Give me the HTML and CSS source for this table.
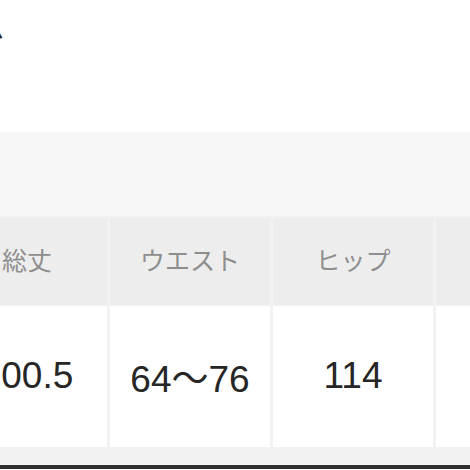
FILE: index.html
```html
<!DOCTYPE html>
<html lang="ja">
<head>
<meta charset="utf-8">
<link rel="stylesheet" href="styles.css">
</head>
<body>
<div class="page">
  <h2 class="title">サイズ</h2>
  <div class="band"></div>
  <div class="sizes">
    <div class="cell head">総丈</div>
    <div class="cell head">ウエスト</div>
    <div class="cell head">ヒップ</div>
    <div class="cell head"></div>
    <div class="cell val">100.5</div>
    <div class="cell val">64〜76</div>
    <div class="cell val">114</div>
    <div class="cell val"></div>
  </div>
  <div class="foot"></div>
</div>
</body>
</html>
```
FILE: styles.css
```css
html, body {
  margin: 0;
  padding: 0;
  background: #ffffff;
  overflow: hidden;
}
.page {
  margin-left: -53px;
  width: 700px;
  font-family: "Liberation Sans", "Noto Sans CJK JP", sans-serif;
}
.title {
  margin: 0 0 0 -50px;
  padding-top: 26px;
  height: 132px;
  box-sizing: border-box;
  font-family: "Noto Sans CJK JP", sans-serif;
  font-size: 36px;
  line-height: 44px;
  font-weight: 400;
  color: #222;
}
.band {
  height: 84px;
  background: #f7f7f7;
}
.sizes {
  display: grid;
  grid-template-columns: repeat(4, 160px);
  grid-template-rows: 87px 141px;
  column-gap: 3px;
  row-gap: 1px;
  background: #f2f2f2;
  padding: 2px 0 17px;
}
.cell {
  display: flex;
  align-items: center;
  justify-content: center;
}
.head {
  background: #ededed;
  color: #8e8e8e;
  font-family: "Noto Sans CJK JP", sans-serif;
  font-size: 25px;
  padding-bottom: 6px;
  box-sizing: border-box;
}
.val {
  background: #ffffff;
  color: #262626;
  font-size: 37px;
  padding-bottom: 2px;
  box-sizing: border-box;
}
.val:first-of-type {
  padding-left: 4px;
}
.foot {
  height: 1px;
  background: #f9f9f9;
  border-bottom: 4px solid #303030;
}
```
